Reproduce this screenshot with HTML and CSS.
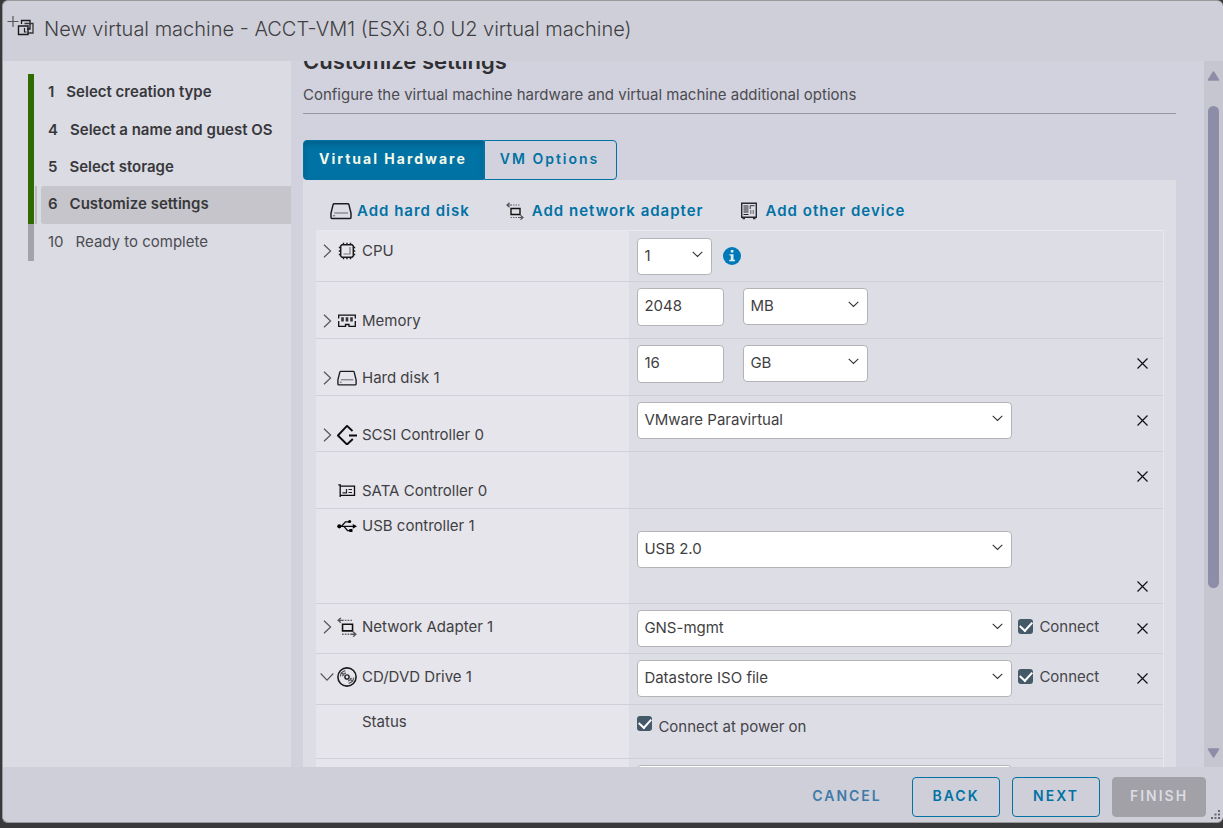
FILE: index.html
```html
<!DOCTYPE html>
<html lang="en">
<head>
<meta charset="utf-8">
<title>New virtual machine</title>
<link rel="stylesheet" href="styles.css">
</head>
<body>
<svg class="sprite" aria-hidden="true">
  <symbol id="i-right" viewBox="0 0 9 14"><path d="M1 .7 7.6 7 1 13.3" fill="none" stroke="#55555c" stroke-width="1.2"/></symbol>
  <symbol id="i-down" viewBox="0 0 14 9"><path d="M.7 1 7 7.6 13.3 1" fill="none" stroke="#55555c" stroke-width="1.2"/></symbol>
  <symbol id="i-caret" viewBox="0 0 11 7"><path d="M.7 .9 5.5 5.5 10.3 .9" fill="none" stroke="#333" stroke-width="1.1"/></symbol>
  <symbol id="i-x" viewBox="0 0 11 11"><path d="M.5 .5l10 10M10.500 .5l-10 10" fill="none" stroke="#111" stroke-width="1.2"/></symbol>
  <symbol id="i-disk" viewBox="0 0 22 17"><path d="M4.200 1.200h13.600q.9 0 1.100.9L21 10.500V15q0 1-1 1H2q-1 0-1-1v-4.500L3.100 2.100Q3.300 1.200 4.200 1.200z" fill="none" stroke="#1c1c20" stroke-width="1.500"/><path d="M4.200 10.500h13.800M3 13.200h2.200" stroke="#66666c" stroke-width="1.100"/></symbol>
  <symbol id="i-net" viewBox="0 0 18 18"><path d="M5 6.500h9v6H5z" fill="none" stroke="#111" stroke-width="1.400"/><path d="M1 3h5M3.500 .8l-2.500 2.200 2.500 2.200M12 15.500h5M14.500 13.300l2.500 2.200-2.500 2.200" fill="none" stroke="#55555a" stroke-width="1.200"/><path d="M7 3h7.500M4.500 15.500h7" fill="none" stroke="#66666b" stroke-width="1.200" stroke-dasharray="1.500 1"/></symbol>
  <symbol id="i-device" viewBox="0 0 18 18"><path d="M1.700 1.200h14.600v14H1.700z" fill="none" stroke="#2a2a2e" stroke-width="1.400"/><path d="M2.500 16.500h2.500M13 16.500h2.500" stroke="#2a2a2e" stroke-width="1.500"/><path d="M3.500 4h5M3.500 6h5M3.500 8h5M3.500 10h5M3.500 12.500h5" stroke="#222" stroke-width="1.200"/><path d="M10.200 7V3.700H14.500M10 9h1.500M12.500 9H14M10 11h1.500M12.500 11H14" fill="none" stroke="#333"/></symbol>
  <symbol id="i-cpu" viewBox="0 0 20 20"><path d="M5 3.700h10l1.300 1.300v10L15 16.300H5L3.700 15V5z" fill="none" stroke="#1a1a1d" stroke-width="1.500"/><path d="M6.500 1.800v2M10 1.800v2M13.500 1.800v2M6.500 16.200v2M10 16.200v2M13.500 16.200v2M1.800 6.500h2M1.800 10h2M1.800 13.500h2M16.200 6.500h2M16.200 10h2M16.200 13.500h2" stroke="#1a1a1d" stroke-width="1.400"/><path d="M13 6v7H6.500" fill="none" stroke="#77777c" stroke-width="1.200"/></symbol>
  <symbol id="i-mem" viewBox="-1 0 20 13"><path d="M.7 4V.7h16.600V4M17.300 6.500v5.300H11V10H7.500v1.800H.7V6.500" fill="none" stroke="#111" stroke-width="1.300"/><path d="M4.500 2.800v4.200M9 2.800v4.200M13.500 2.800v4.200" stroke="#333338" stroke-width="2.600"/></symbol>
  <symbol id="i-scsi" viewBox="0 0 20 20"><path d="M15.500 6 10 .9 .9 10.500 10 19.500l5.800-5.500M12 10.500h8" fill="none" stroke="#0c0c0e" stroke-width="1.900"/></symbol>
  <symbol id="i-sata" viewBox="-1 0 20 14"><path d="M.3 .8h1.900V13M2.200 2.200h14.300v9.200H2.200" fill="none" stroke="#0c0c0e" stroke-width="1.300"/><path d="M4.500 8.800h4V5M10.500 5.500H14M10.500 8.500H14" fill="none" stroke="#222" stroke-width="1.200"/></symbol>
  <symbol id="i-usb" viewBox="0 0 19 12"><path d="M2 6.300h14M4.500 6 8 2h3.500M6.500 6.300 10 10.300h2.500" fill="none" stroke="#0c0c0e" stroke-width="1.200"/><circle cx="2.200" cy="6.300" r="2"/><circle cx="12" cy="1.700" r="1.500"/><path d="M11.700 8.800h3v3h-3zM15 4l4 2.300-4 2.300z"/></symbol>
  <symbol id="i-disc" viewBox="0 0 18 18"><circle cx="9" cy="9" r="8.200" fill="none" stroke="#1a1a1d" stroke-width="1.400"/><circle cx="9" cy="9" r="1.900" fill="none" stroke="#222" stroke-width="1.300"/><path d="M3 8.500a6 6 0 0 1 4.500-5.300M5 8.300a4.200 4.200 0 0 1 3-3M15 9.500a6 6 0 0 1-4.500 5.300M13 9.700a4.200 4.200 0 0 1-3 3M3.500 5l3 2M14.500 13l-3-2" fill="none" stroke="#55555a" stroke-width="1.100"/></symbol>
</svg>

<div class="modal" role="dialog" aria-labelledby="title">
  <header class="head">
    <svg class="vm-icon" viewBox="0 0 28 24" aria-hidden="true"><path d="M6 0v11M.5 5.500h11" stroke="#55555a" stroke-width="1.200"/><path d="M14.500 8V4.500H23V13h-3" fill="none" stroke="#1a1a1d" stroke-width="1.300"/><path d="M17.500 7.500H26V17h-5" fill="none" stroke="#333338" stroke-width="1.300"/><path d="M11.500 10H21v8.500h-9.500z" fill="none" stroke="#1a1a1d" stroke-width="1.400"/><path d="M17.500 12v4h2" fill="none" stroke="#1a1a1d" stroke-width="1.200"/></svg>
    <h1 id="title">New virtual machine - ACCT-VM1 (ESXi 8.0 U2 virtual machine)</h1>
  </header>

  <div class="body">
    <nav class="steps" aria-label="Wizard steps">
      <ol>
        <li class="done"><a href="#s1"><span>1</span>Select creation type</a></li>
        <li class="done"><a href="#s4"><span>4</span>Select a name and guest OS</a></li>
        <li class="done"><a href="#s5"><span>5</span>Select storage</a></li>
        <li class="done current"><a href="#s6" aria-current="step"><span>6</span>Customize settings</a></li>
        <li><a href="#s10"><span>10</span>Ready to complete</a></li>
      </ol>
    </nav>

    <main class="content">
      <div class="page">
        <h2>Customize settings</h2>
        <p class="lead">Configure the virtual machine hardware and virtual machine additional options</p>
        <div class="tabs" role="tablist">
          <button type="button" class="tab active" role="tab" aria-selected="true">Virtual Hardware</button><button type="button" class="tab" role="tab" aria-selected="false">VM Options</button>
        </div>
        <section class="panel">
          <div class="actions">
            <button type="button"><svg class="w22"><use href="#i-disk"/></svg>Add hard disk</button>
            <button type="button"><svg class="w18"><use href="#i-net"/></svg>Add network adapter</button>
            <button type="button"><svg class="w18"><use href="#i-device"/></svg>Add other device</button>
          </div>
          <div class="hardware">
            <div class="row short cpu">
              <div class="name"><svg class="tw"><use href="#i-right"/></svg><svg class="ic"><use href="#i-cpu"/></svg><label for="cpu">CPU</label></div>
              <div class="value"><span class="select tiny"><select id="cpu"><option>1</option></select><svg><use href="#i-caret"/></svg></span>
                <button type="button" class="info" aria-label="CPU information"><svg viewBox="0 0 18 18"><circle cx="9" cy="9" r="9" fill="#0079b8"/><path d="M7.800 3h2.600v2.400H7.800zM6.500 7.200h4v5.600H12v1.400H6.300v-1.400h1.500V8.600H6.500z" fill="#e8edf3"/></svg></button></div>
            </div>
            <div class="row low">
              <div class="name"><svg class="tw"><use href="#i-right"/></svg><svg class="ic"><use href="#i-mem"/></svg><label for="mem">Memory</label></div>
              <div class="value"><input class="num" id="mem" type="text" value="2048"><span class="select unit"><select aria-label="Memory unit"><option>MB</option></select><svg><use href="#i-caret"/></svg></span></div>
            </div>
            <div class="row low">
              <div class="name"><svg class="tw"><use href="#i-right"/></svg><svg class="ic"><use href="#i-disk"/></svg><label for="hd">Hard disk 1</label></div>
              <div class="value"><input class="num" id="hd" type="text" value="16"><span class="select unit"><select aria-label="Hard disk unit"><option>GB</option></select><svg><use href="#i-caret"/></svg></span></div>
              <button type="button" class="remove" aria-label="Remove hard disk"><svg><use href="#i-x"/></svg></button>
            </div>
            <div class="row low scsi">
              <div class="name"><svg class="tw"><use href="#i-right"/></svg><svg class="ic"><use href="#i-scsi"/></svg><label for="scsi">SCSI Controller 0</label></div>
              <div class="value"><span class="select wide"><select id="scsi"><option>VMware Paravirtual</option></select><svg><use href="#i-caret"/></svg></span></div>
              <button type="button" class="remove" aria-label="Remove SCSI controller"><svg><use href="#i-x"/></svg></button>
            </div>
            <div class="row low">
              <div class="name"><span class="tw"></span><svg class="ic"><use href="#i-sata"/></svg><span>SATA Controller 0</span></div>
              <div class="value"></div>
              <button type="button" class="remove" aria-label="Remove SATA controller"><svg><use href="#i-x"/></svg></button>
            </div>
            <div class="row usb">
              <div class="name"><span class="tw"></span><svg class="ic"><use href="#i-usb"/></svg><label for="usb">USB controller 1</label></div>
              <div class="value"><span class="select wide"><select id="usb"><option>USB 2.0</option></select><svg><use href="#i-caret"/></svg></span></div>
              <button type="button" class="remove" aria-label="Remove USB controller"><svg><use href="#i-x"/></svg></button>
            </div>
            <div class="row">
              <div class="name"><svg class="tw"><use href="#i-right"/></svg><svg class="ic"><use href="#i-net"/></svg><label for="nic">Network Adapter 1</label></div>
              <div class="value"><span class="select wide"><select id="nic"><option>GNS-mgmt</option></select><svg><use href="#i-caret"/></svg></span><label class="check"><input type="checkbox" checked>Connect</label></div>
              <button type="button" class="remove" aria-label="Remove network adapter"><svg><use href="#i-x"/></svg></button>
            </div>
            <div class="row short">
              <div class="name"><svg class="tw open"><use href="#i-down"/></svg><svg class="ic"><use href="#i-disc"/></svg><label for="cd">CD/DVD Drive 1</label></div>
              <div class="value"><span class="select wide"><select id="cd"><option>Datastore ISO file</option></select><svg><use href="#i-caret"/></svg></span><label class="check"><input type="checkbox" checked>Connect</label></div>
              <button type="button" class="remove" aria-label="Remove CD/DVD drive"><svg><use href="#i-x"/></svg></button>
            </div>
            <div class="row status">
              <div class="name"><span class="tw"></span><span class="ic"></span><span>Status</span></div>
              <div class="value"><label class="check"><input type="checkbox" checked>Connect at power on</label></div>
            </div>
            <div class="row low">
              <div class="name"></div>
              <div class="value"><span class="select wide"><select aria-label="ISO file"><option></option></select></span></div>
            </div>
          </div>
        </section>
      </div>
    </main>

    <div class="scrollbar" aria-hidden="true">
      <svg viewBox="0 0 12 10"><path d="M6 1 11 9H1z" fill="#8e8da8" stroke="#8e8da8" stroke-width="1.500" stroke-linejoin="round"/></svg>
      <div class="track"><div class="thumb"></div></div>
      <svg viewBox="0 0 12 10"><path d="M6 9 11 1H1z" fill="#8e8da8" stroke="#8e8da8" stroke-width="1.500" stroke-linejoin="round"/></svg>
    </div>
  </div>

  <footer class="foot">
    <button type="button" class="btn link">CANCEL</button>
    <button type="button" class="btn">BACK</button>
    <button type="button" class="btn">NEXT</button>
    <button type="button" class="btn finish" disabled>FINISH</button>
    <svg class="grip" viewBox="0 0 9 9" aria-hidden="true"><path d="M7 0h2v2H7zM3.500 3.500h2v2h-2zM7 3.500h2v2H7zM0 7h2v2H0zM3.500 7h2v2h-2zM7 7h2v2H7z" fill="#66666e"/></svg>
  </footer>
</div>
</body>
</html>
```

FILE: styles.css
```css
* { box-sizing: border-box; }
body {
  margin: 0;
  height: 100vh;
  padding: 0 0 5px 2px;
  background: #39393b;
  color: #3f3f43;
  font: 15px/24px Inter, "Open Sans", sans-serif;
  overflow: hidden;
}
button, input, select { font: inherit; color: inherit; }
button { padding: 0; border: 0; background: none; cursor: pointer; }
h1, h2, p, ol { margin: 0; padding: 0; }
.sprite { position: absolute; width: 0; height: 0; }

.modal {
  height: 100%;
  display: flex;
  flex-direction: column;
  border: 1px solid #99999b;
  border-right: 0;
  border-radius: 6px;
  background: #cfcfd9;
  overflow: hidden;
}

.head { flex: none; height: 60px; display: flex; align-items: flex-start; padding: 15px 4px; }
.head h1 { font-size: 20px; line-height: 27px; font-weight: 300; margin-left: 9px; white-space: nowrap; }
.vm-icon { width: 28px; height: 24px; }

.body { flex: 1; min-height: 0; display: flex; }

.steps { flex: none; width: 288px; background: #dbdbe4; padding: 13px 0 0 25px; }
.steps ol { list-style: none; min-height: 187px; display: flex; flex-direction: column; }
.steps li { flex: 1; display: flex; border-left: 6px solid #a3a3aa; padding-left: 7px; }
.steps a { flex: 1; display: flex; align-items: center; padding: 0 0 1px 7px; color: #4b4b50; text-decoration: none; white-space: nowrap; }
.steps span { margin-right: 12px; }
.steps .done { border-color: #2f6b00; }
.steps .done a { font-weight: 600; color: #38383b; }
.steps .current { background: linear-gradient(90deg, transparent 1px, #b9b9c0 1px, #b9b9c0 3px, transparent 3px); }
.steps .current a { background: #c5c5cb; border-radius: 3px 0 0 3px; }

.content { flex: 1; min-width: 0; background: #d2d2de; overflow: hidden; padding: 0 28px 0 12px; }
.page { margin-top: -14px; }
h2 { font-size: 22px; line-height: 28px; font-weight: 600; color: #303033; }
.lead { padding: 8px 0 6px; border-bottom: 1px solid #9696a3; color: #4b4b50; }

.tabs { display: flex; margin-top: 26px; }
.tab { height: 40px; padding: 0 16px 2px 15px; border: 1px solid #0072a3; color: #0072a3; font-weight: 600; font-size: 14px; letter-spacing: 2px; border-radius: 0 4px 4px 0; }
.tab + .tab { padding-right: 17px; }
.tab.active { background: #0072a3; color: #f4f8ea; font-weight: 700; border-radius: 4px 0 0 4px; box-shadow: inset 0 3px 4px #00608c; }

.panel { background: #dddde6; padding: 10px 12px 0 13px; }
.actions { display: flex; gap: 36px; height: 40px; padding: 1px 0 0 14px; }
.actions button { display: flex; align-items: center; height: 40px; color: #0072a3; font-weight: 600; letter-spacing: 1px; white-space: nowrap; }
.actions svg { height: 18px; }
.w22 { width: 22px; margin-right: 5px; }
.w18 { width: 18px; margin-right: 8px; }

.hardware { border: 1px solid #e8e8ee; border-left: 0; }
.row { display: grid; grid-template-columns: 37% 1fr 40px; min-height: 50px; border-bottom: 1px solid #d0d0d9; }
.row.short { min-height: 51px; }
.row.low { min-height: 57px; }
.row.scsi { min-height: 56px; }
.row.usb { min-height: 95px; }
.row.status { min-height: 54px; }
.name { background: #e6e5eb; display: flex; align-items: flex-start; padding: 11px 0 0 6px; }
.name svg, .name .tw, .name .ic { flex: none; height: 24px; }
.low .name { padding-top: 27px; }
.cpu .name { padding-top: 8px; }
.usb .name, .status .name { padding-top: 5px; }
.name .tw { width: 11px; height: 24px; padding: 5px 1px; }
.name svg.tw.open { width: 16px; margin: 0 -2px 0 -3px; padding: 7px 1px; }
.name .ic { width: 20px; margin: 0 5px 0 4px; padding: 2px 0; }
.value { display: flex; align-items: flex-start; padding: 6px 0 0 8px; min-width: 0; }
.cpu .value { padding-top: 7px; }
.usb .value { padding-top: 22px; }
.select { position: relative; display: block; }
.select select { appearance: none; display: block; width: 100%; height: 37px; padding: 0 6px 2px; border: 1px solid #b4b4b6; border-radius: 4px; background: #fff; }
.select svg { position: absolute; right: 9px; top: 13px; width: 11px; height: 7px; pointer-events: none; }
.tiny { width: 75px; }
.unit { width: 125px; }
.wide { width: 375px; }
.num { width: 87px; height: 38px; padding: 0 6px 3px; margin-right: 19px; border: 1px solid #b4b4b6; border-radius: 4px; background: #fff; }
.info { width: 18px; height: 18px; margin: 9px 0 0 11px; }
.info svg { display: block; width: 18px; height: 18px; }
.check { display: flex; align-items: flex-start; margin: 5px 0 0 6px; color: #45454a; white-space: nowrap; }
.check input { appearance: none; flex: none; display: grid; place-items: center; width: 15px; height: 15px; margin: 4px 6px 0 0; border-radius: 3px; background: #455a68; }
.check input:checked::before { content: ""; width: 6px; height: 10px; margin-bottom: 3px; border: solid #fff; border-width: 0 2px 2px 0; transform: rotate(42deg); }
.status .check { margin: 4px 0 0; }
.status .check input { margin-top: 1px; }
.remove { width: 11px; height: 11px; margin: 19px 0 0 14px; }
.remove svg { display: block; width: 11px; height: 11px; }
.usb .remove { margin-top: 72px; }

.scrollbar { flex: none; width: 19px; background: #c6c6d1; display: flex; flex-direction: column; align-items: center; padding: 10px 0 9px; }
.scrollbar svg { width: 13px; height: 10px; }
.track { flex: 1; width: 11px; padding-top: 25px; }
.thumb { height: 75%; border-radius: 6px; background: #8e8da8; }

.foot { flex: none; position: relative; height: 55px; display: flex; justify-content: flex-end; align-items: flex-start; gap: 12px; padding: 10px 17px 0; }
.btn { height: 40px; min-width: 88px; padding-bottom: 2px; border: 1px solid #0072a3; border-radius: 4px; color: #0072a3; font-weight: 600; font-size: 14px; letter-spacing: 2px; }
.btn.link { border-color: transparent; color: #3f7ba8; min-width: 106px; }
.btn.finish { min-width: 94px; border-color: #a1a1a7; background: #a1a1a7; color: #dcdce3; cursor: default; }
.grip { position: absolute; right: 3px; bottom: 3px; width: 9px; height: 9px; }
```
